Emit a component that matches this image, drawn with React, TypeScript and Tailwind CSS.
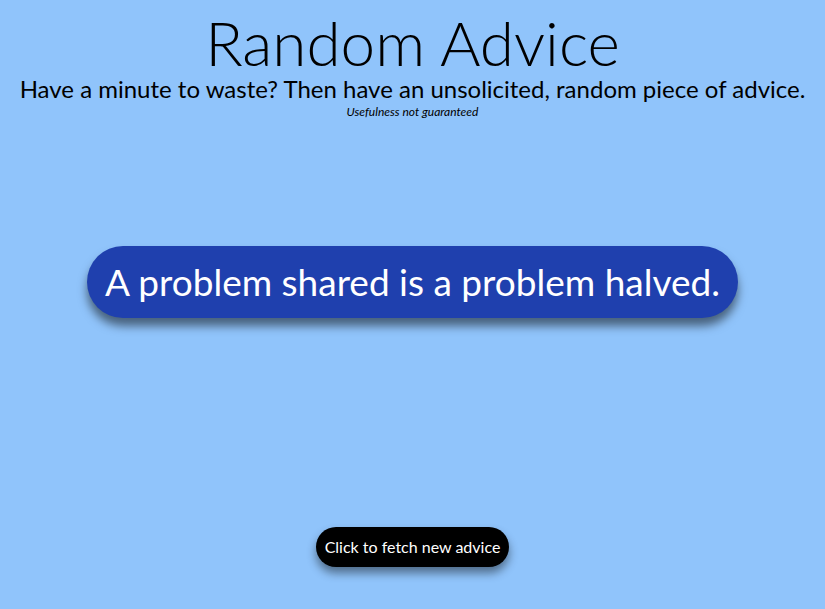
import React, { useState } from 'react';

const ADVICE = [
    'A problem shared is a problem halved.',
    'Never pay full price for a sofa.',
    'Do not eat yellow snow.',
];

const App = () => {
    const [idx, setIdx] = useState(0);

    return (
        <div className="min-h-screen bg-[#90c4fb] flex flex-col items-center text-black" style={{ fontFamily: 'Lato, "Open Sans", sans-serif' }}>
            <header className="flex flex-col items-center pt-[8px]">
                <h1 className="text-[62px] leading-[68px] font-light">Random Advice</h1>
                <p className="text-[24px] leading-[26px]">Have a minute to waste? Then have an unsolicited, random piece of advice.</p>
                <p className="text-[12px] leading-[16px] italic mt-[2px]">Usefulness not guaranteed</p>
            </header>

            <div className="mt-[126px] bg-[#1f40ae] rounded-full px-[18px] h-[72px] flex items-center shadow-[0_8px_10px_rgba(0,0,0,0.5)]">
                <span className="text-white text-[37px]">{ADVICE[idx]}</span>
            </div>

            <button
                onClick={() => setIdx((idx + 1) % ADVICE.length)}
                className="mt-[209px] bg-black text-white rounded-full h-[40px] px-[9px] text-[16px] shadow-[0_6px_10px_rgba(0,0,0,0.45)]"
            >
                Click to fetch new advice
            </button>
        </div>
    );
};

export default App;
